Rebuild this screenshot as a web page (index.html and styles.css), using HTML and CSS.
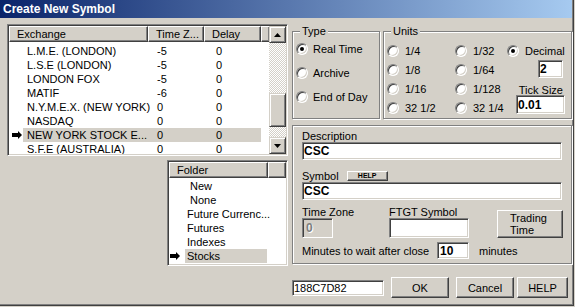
FILE: index.html
```html
<!DOCTYPE html>
<html lang="en">

<head>
    <meta charset="UTF-8">
    <title>Create New Symbol</title>
    <link rel="stylesheet" href="styles.css">
</head>

<body>
    <div class="window">
        <div class="titlebar">Create New Symbol</div>

        <div class="main">
            <div class="left">
                <!-- exchanges -->
                <div class="listbox exch">
                    <div class="list-view">
                        <div class="list-head">
                            <div class="hcell" style="width:139px">Exchange</div>
                            <div class="hcell" style="width:56px">Time Z...</div>
                            <div class="hcell" style="width:57px">Delay</div>
                            <div class="hcell" style="width:8px"></div>
                        </div>
                        <div class="rows">
                            <div class="row"><span class="mark"></span><div class="cells"><span class="c-name">L.M.E. (LONDON)</span><span class="c-tz">-5</span><span class="c-delay">0</span></div></div>
                            <div class="row"><span class="mark"></span><div class="cells"><span class="c-name">L.S.E (LONDON)</span><span class="c-tz">-5</span><span class="c-delay">0</span></div></div>
                            <div class="row"><span class="mark"></span><div class="cells"><span class="c-name">LONDON FOX</span><span class="c-tz">-5</span><span class="c-delay">0</span></div></div>
                            <div class="row"><span class="mark"></span><div class="cells"><span class="c-name">MATIF</span><span class="c-tz">-6</span><span class="c-delay">0</span></div></div>
                            <div class="row"><span class="mark"></span><div class="cells"><span class="c-name">N.Y.M.E.X. (NEW YORK)</span><span class="c-tz">0</span><span class="c-delay">0</span></div></div>
                            <div class="row"><span class="mark"></span><div class="cells"><span class="c-name">NASDAQ</span><span class="c-tz">0</span><span class="c-delay">0</span></div></div>
                            <div class="row sel"><span class="mark"><svg width="11" height="8" viewBox="0 0 11 8"><polygon points="0,2 6,2 6,0 10,4 6,8 6,6 0,6" fill="#000"/></svg></span><div class="cells"><span class="c-name">NEW YORK STOCK E...</span><span class="c-tz">0</span><span class="c-delay">0</span></div></div>
                            <div class="row"><span class="mark"></span><div class="cells"><span class="c-name">S.F.E (AUSTRALIA)</span><span class="c-tz">0</span><span class="c-delay">0</span></div></div>
                        </div>
                    </div>
                    <div class="vscroll">
                        <div class="sbtn"><svg width="7" height="4" viewBox="0 0 7 4"><polygon points="3.5,0 7,4 0,4" fill="#000"/></svg></div>
                        <div class="track"><div class="thumb"></div></div>
                        <div class="sbtn"><svg width="7" height="4" viewBox="0 0 7 4"><polygon points="0,0 7,0 3.5,4" fill="#000"/></svg></div>
                    </div>
                </div>

                <!-- folders -->
                <div class="listbox folder">
                    <div class="list-view">
                        <div class="list-head">
                            <div class="hcell" style="width:99px">Folder</div>
                            <div class="hcell" style="width:18px"></div>
                        </div>
                        <div class="rows frows">
                            <div class="row"><span class="mark"></span><div class="cells"><span class="c-name indent">New</span></div></div>
                            <div class="row"><span class="mark"></span><div class="cells"><span class="c-name indent">None</span></div></div>
                            <div class="row"><span class="mark"></span><div class="cells"><span class="c-name">Future Currenc...</span></div></div>
                            <div class="row"><span class="mark"></span><div class="cells"><span class="c-name">Futures</span></div></div>
                            <div class="row"><span class="mark"></span><div class="cells"><span class="c-name">Indexes</span></div></div>
                            <div class="row sel"><span class="mark"><svg width="11" height="8" viewBox="0 0 11 8"><polygon points="0,2 6,2 6,0 10,4 6,8 6,6 0,6" fill="#000"/></svg></span><div class="cells"><span class="c-name">Stocks</span></div></div>
                        </div>
                    </div>
                </div>
            </div>

            <div class="right">
                <div class="top">
                    <fieldset class="group type">
                        <legend>Type</legend>
                        <div class="opts">
                            <div class="opt"><span class="radio on"></span>Real Time</div>
                            <div class="opt"><span class="radio"></span>Archive</div>
                            <div class="opt"><span class="radio"></span>End of Day</div>
                        </div>
                    </fieldset>
                    <fieldset class="group units">
                        <legend>Units</legend>
                        <div class="ucols">
                            <div class="ucol c1">
                                <div class="uopt"><span class="radio"></span>1/4</div>
                                <div class="uopt"><span class="radio"></span>1/8</div>
                                <div class="uopt"><span class="radio"></span>1/16</div>
                                <div class="uopt"><span class="radio"></span>32 1/2</div>
                            </div>
                            <div class="ucol c2">
                                <div class="uopt"><span class="radio"></span>1/32</div>
                                <div class="uopt"><span class="radio"></span>1/64</div>
                                <div class="uopt"><span class="radio"></span>1/128</div>
                                <div class="uopt"><span class="radio"></span>32 1/4</div>
                            </div>
                            <div class="ucol c3">
                                <div class="uopt"><span class="radio on"></span>Decimal</div>
                                <input class="field bold dec" value="2">
                                <div class="tick-label">Tick Size</div>
                                <input class="field bold tick" value="0.01">
                            </div>
                        </div>
                    </fieldset>
                </div>

                <div class="panel">
                    <div class="lbl">Description</div>
                    <input class="field bold wide" value="CSC">

                    <div class="sym-row">
                        <span class="lbl">Symbol</span>
                        <button class="btn tiny">HELP</button>
                    </div>
                    <input class="field bold wide" value="CSC">

                    <div class="tz-row">
                        <div class="fgroup tzg">
                            <div class="lbl">Time Zone</div>
                            <input class="field bold tz" value="0" disabled>
                        </div>
                        <div class="fgroup ftgt">
                            <div class="lbl">FTGT Symbol</div>
                            <input class="field ftgt-in" value="">
                        </div>
                        <button class="btn trading">Trading<br>Time</button>
                    </div>

                    <div class="min-row">
                        <span class="min-lbl">Minutes to wait after close</span>
                        <input class="field bold mins" value="10">
                        <span class="min-unit">minutes</span>
                    </div>
                </div>

                <div class="bottom">
                    <input class="field code" value="188C7D82">
                    <button class="btn ok">OK</button>
                    <button class="btn cancel">Cancel</button>
                    <button class="btn help">HELP</button>
                </div>
            </div>
        </div>
    </div>
</body>

</html>
```

FILE: styles.css
```css
body {
    margin: 0;
    background-color: #d4d0c8;
    font: 11px "Liberation Sans", Arial, sans-serif;
    color: #000;
}

.window {
    width: 574px;
    height: 306px;
    box-sizing: border-box;
    border-right: 1px solid #404040;
    border-bottom: 1px solid #404040;
    padding: 0 1px 1px 0;
    box-shadow: inset -1px -1px #808080;
    background-color: #d4d0c8;
}

.titlebar {
    height: 18px;
    line-height: 18px;
    padding-left: 3px;
    color: #fff;
    font-weight: bold;
    font-size: 12px;
    background: linear-gradient(to right, #0a246a, #a6caf0);
}

.main {
    display: flex;
}

.left {
    width: 281px;
    padding: 6px 0 0 7px;
}

.right {
    width: 280px;
    margin-left: 4px;
    padding-top: 6px;
}

/* list boxes */

.listbox {
    box-sizing: border-box;
    border: 1px solid;
    border-color: #808080 #fff #fff #808080;
    box-shadow: inset 1px 1px #404040, inset -1px -1px #d4d0c8;
    background-color: #fff;
    padding: 1px;
    display: flex;
    overflow: hidden;
}

.exch {
    width: 281px;
    height: 132px;
}

.folder {
    width: 121px;
    height: 106px;
    margin: 4px 0 0 160px;
}

.list-view {
    flex: 1;
    overflow: hidden;
}

.list-head {
    display: flex;
    height: 16px;
}

.hcell {
    box-sizing: border-box;
    height: 16px;
    line-height: 14px;
    padding-left: 7px;
    border: 1px solid;
    border-color: #fff #404040 #404040 #fff;
    box-shadow: inset -1px -1px #808080;
    background-color: #d4d0c8;
    white-space: nowrap;
    overflow: hidden;
    flex: none;
}

.rows {
    padding-top: 2px;
}

.frows {
    padding-top: 1px;
}

.row {
    display: flex;
    height: 14px;
    line-height: 14px;
    white-space: nowrap;
}

.mark {
    width: 14px;
    flex: none;
    display: flex;
    align-items: center;
}

.mark svg {
    margin-left: 3px;
}

.exch .cells {
    display: grid;
    grid-template-columns: 125px 56px 57px;
}

.folder .mark {
    width: 16px;
}

.folder .mark svg {
    margin-left: 1px;
}

.folder .cells {
    width: 82px;
}

.row.sel .cells {
    background-color: #d4d0c8;
}

.c-name {
    padding-left: 4px;
}

.folder .c-name {
    padding-left: 2px;
}

.folder .c-name.indent {
    padding-left: 5px;
}

.c-tz {
    padding-left: 9px;
}

.c-delay {
    padding-left: 12px;
}

/* scrollbar */

.vscroll {
    width: 17px;
    flex: none;
    display: flex;
    flex-direction: column;
    background: repeating-conic-gradient(#fff 0 25%, #d4d0c8 0 50%) 0 0 / 2px 2px;
}

.sbtn,
.thumb {
    box-sizing: border-box;
    border: 1px solid;
    border-color: #d4d0c8 #404040 #404040 #d4d0c8;
    box-shadow: inset 1px 1px #fff, inset -1px -1px #808080;
    background-color: #d4d0c8;
}

.sbtn {
    height: 17px;
    display: flex;
    align-items: center;
    justify-content: center;
}

.track {
    flex: 1;
}

.thumb {
    height: 34px;
    margin-top: 50px;
}

/* group boxes */

.top {
    display: flex;
    gap: 3px;
    height: 95px;
}

.group {
    margin: 0;
    padding: 0 0 0 3px;
    border: 1px solid #808080;
    box-shadow: inset 1px 1px #fff, 1px 1px #fff;
    box-sizing: border-box;
    min-width: 0;
}

.group legend {
    margin-left: 4px;
    padding: 0 2px;
    line-height: 14px;
    background-color: #d4d0c8;
}

.type {
    width: 88px;
}

.units {
    width: 189px;
}

.type .opts {
    margin-top: -1px;
}

.opt {
    height: 24px;
    display: flex;
    align-items: center;
    gap: 5px;
}

.radio {
    width: 12px;
    height: 12px;
    box-sizing: border-box;
    border-radius: 50%;
    border: 1px solid;
    border-color: #808080 #fff #fff #808080;
    box-shadow: inset 1px 1px #404040, inset -1px -1px #d4d0c8;
    background-color: #fff;
    display: inline-flex;
    align-items: center;
    justify-content: center;
    flex: none;
}

.radio.on::after {
    content: "";
    width: 4px;
    height: 4px;
    border-radius: 50%;
    background-color: #000;
}

.ucols {
    display: flex;
    padding-top: 3px;
}

.ucol {
    display: flex;
    flex-direction: column;
}

.c1 {
    width: 68px;
}

.c2 {
    width: 52px;
}

.c3 {
    width: 58px;
    align-items: flex-end;
}

.uopt {
    height: 19px;
    display: flex;
    align-items: center;
    gap: 6px;
    white-space: nowrap;
}

.c3 .uopt {
    align-self: flex-start;
}

/* fields */

.field {
    box-sizing: border-box;
    border: 1px solid;
    border-color: #808080 #fff #fff #808080;
    box-shadow: inset 1px 1px #404040, inset -1px -1px #d4d0c8;
    background-color: #fff;
    font: 11px "Liberation Sans", Arial, sans-serif;
    color: #000;
    padding: 0 1px;
    margin: 0;
    outline: none;
    display: block;
}

.field.bold {
    font-weight: bold;
    font-size: 12px;
}

.dec {
    width: 25px;
    height: 18px;
    margin-right: 2px;
}

.tick-label {
    line-height: 10px;
    height: 10px;
    margin: 7px 2px 0 0;
}

.tick {
    width: 49px;
    height: 19px;
}

/* lower panel */

.panel {
    margin-top: 6px;
    height: 139px;
    border: 1px solid #808080;
    box-shadow: inset 1px 1px #fff, 1px 1px #fff;
    box-sizing: border-box;
    padding: 5px 0 0 9px;
}

.lbl {
    line-height: 11px;
    height: 11px;
    white-space: nowrap;
}

.wide {
    width: 260px;
    height: 18px;
}

.sym-row {
    display: flex;
    align-items: flex-start;
    margin-top: 11px;
    height: 11px;
}

.btn {
    box-sizing: border-box;
    border: 1px solid;
    border-color: #fff #404040 #404040 #fff;
    box-shadow: inset -1px -1px #808080;
    background-color: #d4d0c8;
    font: 11px "Liberation Sans", Arial, sans-serif;
    color: #000;
    padding: 0;
    margin: 0;
}

.btn.tiny {
    width: 41px;
    height: 10px;
    margin-left: 8px;
    font-size: 7px;
    font-weight: bold;
    line-height: 8px;
}

.tz-row {
    display: flex;
    align-items: flex-end;
    margin-top: 7px;
}

.fgroup {
    flex: none;
}

.tzg {
    width: 31px;
}

.tz {
    width: 31px;
    height: 20px;
    background-color: #d4d0c8;
    color: #808080;
    text-shadow: 1px 1px #fff;
    padding-left: 3px;
}

.ftgt {
    width: 80px;
    margin-left: 56px;
}

.ftgt-in {
    width: 80px;
    height: 20px;
}

.trading {
    width: 66px;
    height: 28px;
    margin-left: 28px;
    line-height: 12px;
    text-align: left;
    padding-left: 12px;
}

.min-row {
    display: flex;
    align-items: center;
    margin-top: 4px;
}

.min-lbl {
    width: 135px;
    white-space: nowrap;
}

.mins {
    width: 32px;
    height: 17px;
    padding-left: 2px;
}

.min-unit {
    margin-left: 10px;
}

.bottom {
    display: flex;
    align-items: center;
    margin-top: 13px;
    height: 21px;
}

.code {
    width: 92px;
    height: 16px;
}

.ok,
.cancel {
    width: 58px;
    height: 21px;
    margin-left: 7px;
}

.help {
    width: 51px;
    height: 21px;
    margin-left: 3px;
}
```
